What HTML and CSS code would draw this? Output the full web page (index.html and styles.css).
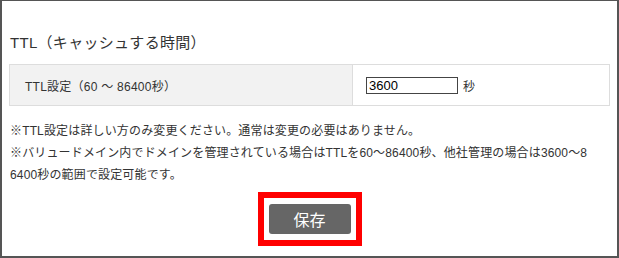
FILE: index.html
```html
<!DOCTYPE html>
<html lang="ja">
<head>
<meta charset="utf-8">
<link rel="stylesheet" href="styles.css">
</head>
<body>
<div class="frame">
  <h2 class="title">TTL（キャッシュする時間）</h2>
  <table class="ttl-table">
    <tr>
      <th class="label">TTL設定（60 〜 86400秒）</th>
      <td class="value"><input class="ttl-input" type="text" value="3600"><span class="unit">秒</span></td>
    </tr>
  </table>
  <div class="notes">
    <p>※TTL設定は詳しい方のみ変更ください。通常は変更の必要はありません。</p>
    <p>※バリュードメイン内でドメインを管理されている場合はTTLを60〜86400秒、他社管理の場合は3600〜86400秒の範囲で設定可能です。</p>
  </div>
  <div class="actions">
    <div class="highlight">
      <button class="save" type="button">保存</button>
    </div>
  </div>
</div>
</body>
</html>
```

FILE: styles.css
```css
html, body {
  margin: 0;
  padding: 0;
  background: #fff;
}
body {
  font-family: "Liberation Sans", "Noto Sans CJK JP", sans-serif;
  color: #333;
}
.frame {
  box-sizing: border-box;
  width: 619px;
  height: 258px;
  border: 2px solid #555;
  border-top-width: 1px;
  padding: 0 7px 0 7px;
}
.title {
  margin: 0;
  padding: 31px 0 0 1px;
  font-size: 15px;
  font-weight: normal;
  line-height: 22px;
  height: 32px;
  letter-spacing: 0.3px;
}
.ttl-table {
  width: 601px;
  border-collapse: collapse;
  font-size: 12px;
}
.ttl-table th,
.ttl-table td {
  border: 1px solid #ddd;
  height: 40px;
  padding: 0;
  vertical-align: middle;
}
.label {
  width: 327px;
  padding-left: 15px !important;
  background: #f2f2f2;
  text-align: left;
  font-weight: normal;
  letter-spacing: 0.25px;
}
.value {
  padding-left: 13px !important;
}
.ttl-input {
  box-sizing: border-box;
  width: 92px;
  height: 17px;
  border: 1px solid #444;
  padding: 0 2px;
  margin: 0;
  font-family: "Liberation Sans", sans-serif;
  font-size: 13px;
  color: #000;
  vertical-align: middle;
}
.unit {
  margin-left: 5px;
  vertical-align: middle;
}
.notes {
  padding: 14px 20px 0 1px;
  font-size: 12px;
  line-height: 22px;
  letter-spacing: 0.15px;
  word-break: break-all;
}
.notes p {
  margin: 0;
}
.actions {
  display: flex;
  justify-content: center;
  padding-top: 6px;
}
.highlight {
  border: 6px solid #f00;
  padding: 6px 5px;
}
.save {
  display: block;
  width: 82px;
  height: 30px;
  border: 0;
  border-radius: 3px;
  background: #666;
  color: #fff;
  font-family: "Noto Sans CJK JP", sans-serif;
  font-size: 16px;
  padding: 0;
}
```
